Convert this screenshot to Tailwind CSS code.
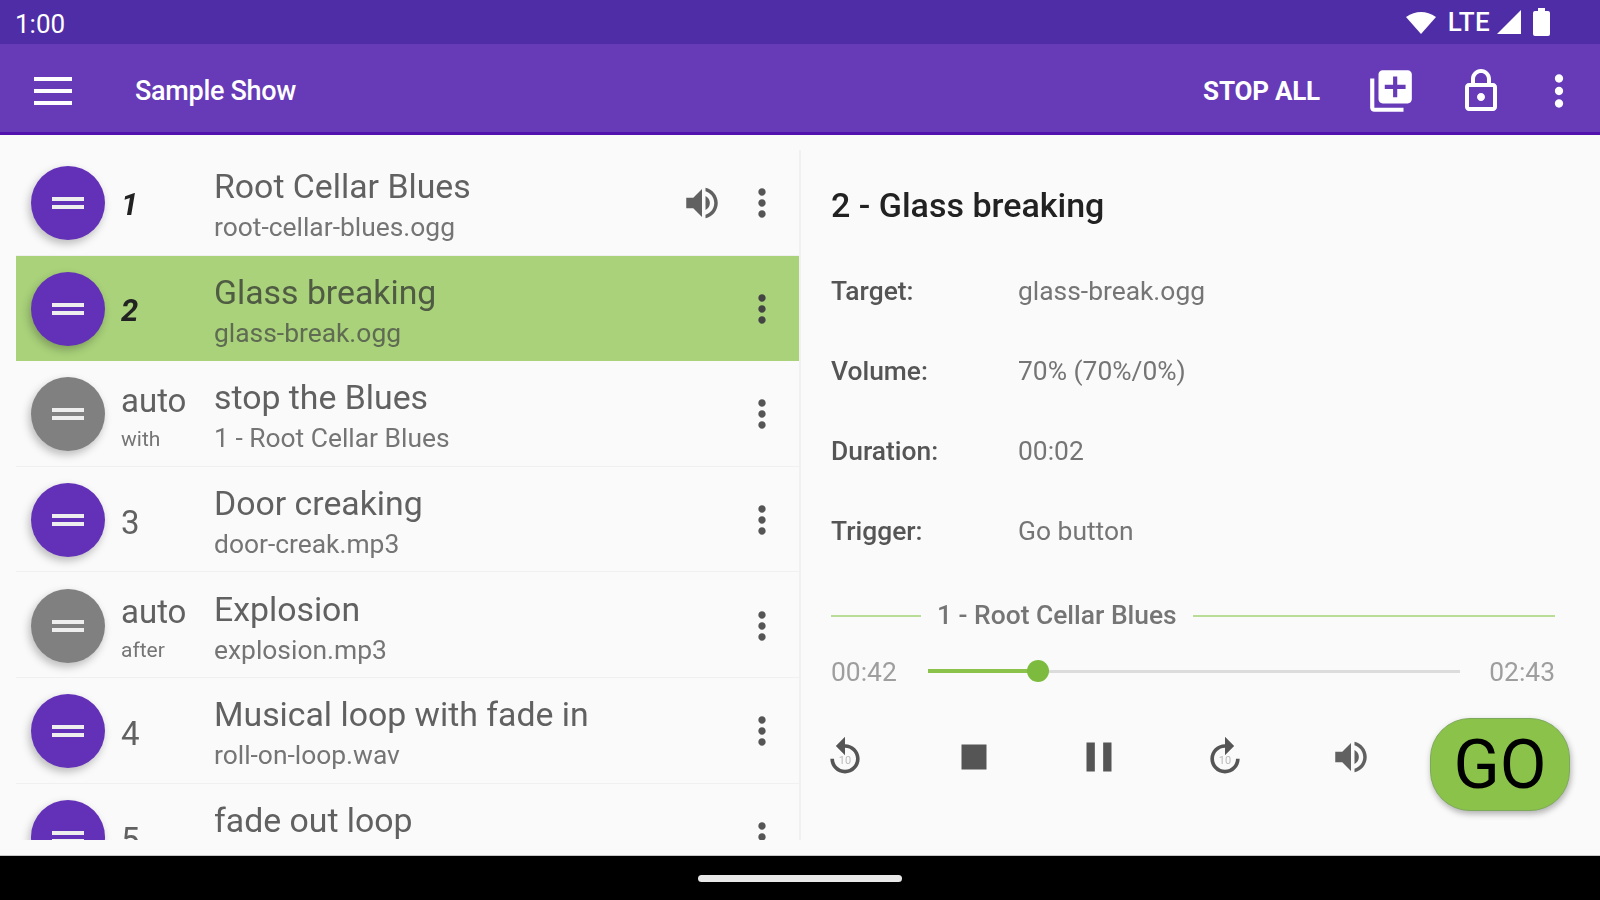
<!DOCTYPE html>
<html lang="en">
<head>
    <meta charset="UTF-8">
    <title>Sample Show</title>
    <script src="https://cdn.jsdelivr.net/npm/@tailwindcss/browser@4"></script>
</head>
<body class="bg-[#fafafa]">
<div class="w-[1600px] h-[900px] overflow-hidden blur-[0.5px] font-['Roboto',sans-serif]">

    <!-- status bar -->
    <div class="h-[44px] bg-[#4f2da6] flex items-center pl-[15px] pr-[50px] text-white">
        <span class="text-[26px] leading-none mt-[3px]">1:00</span>
        <div class="ml-auto flex items-center">
            <svg class="w-[30px] h-[24px]" viewBox="0 0 30 24" fill="#fff"><path d="M0 7 Q15 -3 30 7 L15 24 Z"/></svg>
            <span class="ml-[12px] text-[26px] leading-none font-medium tracking-[0.3px]">LTE</span>
            <svg class="ml-[7px] w-[24px] h-[24px]" viewBox="0 0 24 24" fill="#fff"><path d="M0 24 L24 0 V24 Z"/></svg>
            <svg class="ml-[12px] w-[17px] h-[28px]" viewBox="0 0 17 28" fill="#fff"><path d="M5 0h7v3h3a2 2 0 0 1 2 2v21a2 2 0 0 1-2 2H2a2 2 0 0 1-2-2V5a2 2 0 0 1 2-2h3z"/></svg>
        </div>
    </div>

    <!-- app bar -->
    <div class="h-[91px] bg-[#673ab7] border-b-[3px] border-[#5212ae] flex items-center pl-[34px] pt-[5px] text-white">
        <svg class="w-[38px] h-[28px]" viewBox="0 0 38 28" fill="#fff"><rect width="38" height="4"/><rect y="12" width="38" height="4"/><rect y="24" width="38" height="4"/></svg>
        <span class="ml-[63px] mt-[2px] text-[27px] font-medium tracking-[-0.3px]">Sample Show</span>
        <span class="ml-auto mt-[2px] text-[26px] font-bold tracking-[-0.2px]">STOP ALL</span>
        <svg class="ml-[46px] w-[50px] h-[50px]" viewBox="0 0 24 24" fill="#fff"><path d="M4 6H2v14c0 1.1.9 2 2 2h14v-2H4V6zm16-4H8c-1.1 0-2 .9-2 2v12c0 1.1.9 2 2 2h12c1.1 0 2-.9 2-2V4c0-1.1-.9-2-2-2zm-1 9h-4v4h-2v-4H9V9h4V5h2v4h4v2z"/></svg>
        <svg class="ml-[41px] w-[48px] h-[48px]" viewBox="0 0 24 24" fill="#fff"><path d="M18 8h-1V6c0-2.76-2.24-5-5-5S7 3.24 7 6v2H6c-1.1 0-2 .9-2 2v10c0 1.1.9 2 2 2h12c1.1 0 2-.9 2-2V10c0-1.1-.9-2-2-2zM9 6c0-1.66 1.34-3 3-3s3 1.34 3 3v2H9V6zm9 14H6V10h12v10zm-6-3c1.1 0 2-.9 2-2s-.9-2-2-2-2 .9-2 2 .9 2 2 2z"/></svg>
        <svg class="ml-[29px] mr-[16px] w-[50px] h-[50px]" viewBox="0 0 24 24" fill="#fff"><path d="M12 8c1.1 0 2-.9 2-2s-.9-2-2-2-2 .9-2 2 .9 2 2 2zm0 2c-1.1 0-2 .9-2 2s.9 2 2 2 2-.9 2-2-.9-2-2-2zm0 6c-1.1 0-2 .9-2 2s.9 2 2 2 2-.9 2-2-.9-2-2-2z"/></svg>
    </div>

    <!-- main -->
    <div class="h-[721px] pt-[15px] flex border-b border-[#c8c8c8]">
        <!-- cue list -->
        <div class="ml-[16px] w-[784px] h-[690px] overflow-hidden">

            <div class="h-[105.6px] flex items-center border-b border-[#f0f0f0]">
                <div class="ml-[15px] mt-[2px] w-[74px] h-[74px] shrink-0 rounded-full bg-[#6331b8] shadow-[-2px_4px_8px_rgba(0,0,0,0.25)] flex flex-col items-center justify-center gap-[4px]"><div class="w-[32px] h-[4px] bg-[#eee]"></div><div class="w-[32px] h-[4px] bg-[#eee]"></div></div>
                <div class="ml-[16px] mt-[6px] w-[93px] text-[31px] font-bold italic text-[#222]">1</div>
                <div class="flex-1 min-w-0 mt-[10px]">
                    <div class="text-[33.8px] leading-[40px] text-[#616161]">Root Cellar Blues</div>
                    <div class="text-[26.4px] leading-[40px] text-[#757575]">root-cellar-blues.ogg</div>
                </div>
                <svg class="w-[42px] h-[42px] mr-[17px] mt-[2px]" viewBox="0 0 24 24" fill="#616161"><path d="M3 9v6h4l5 5V4L7 9H3zm13.5 3c0-1.77-1.02-3.29-2.5-4.03v8.05c1.48-.73 2.5-2.25 2.5-4.02zM14 3.23v2.06c2.89.86 5 3.54 5 6.71s-2.11 5.85-5 6.71v2.06c4.01-.91 7-4.49 7-8.77s-2.99-7.86-7-8.77z"/></svg>
                <svg class="w-[44px] h-[44px] mr-[16px] mt-[2px]" viewBox="0 0 24 24" fill="#555"><path d="M12 8c1.1 0 2-.9 2-2s-.9-2-2-2-2 .9-2 2 .9 2 2 2zm0 2c-1.1 0-2 .9-2 2s.9 2 2 2 2-.9 2-2-.9-2-2-2zm0 6c-1.1 0-2 .9-2 2s.9 2 2 2 2-.9 2-2-.9-2-2-2z"/></svg>
            </div>

            <div class="h-[105.6px] flex items-center bg-[#a9d27a]">
                <div class="ml-[15px] mt-[2px] w-[74px] h-[74px] shrink-0 rounded-full bg-[#6331b8] shadow-[-2px_4px_8px_rgba(0,0,0,0.25)] flex flex-col items-center justify-center gap-[4px]"><div class="w-[32px] h-[4px] bg-[#eee]"></div><div class="w-[32px] h-[4px] bg-[#eee]"></div></div>
                <div class="ml-[16px] mt-[6px] w-[93px] text-[31px] font-bold italic text-[#222]">2</div>
                <div class="flex-1 min-w-0 mt-[10px]">
                    <div class="text-[33.8px] leading-[40px] text-[#4f5b42]">Glass breaking</div>
                    <div class="text-[26.4px] leading-[40px] text-[#5f6b52]">glass-break.ogg</div>
                </div>
                <svg class="w-[44px] h-[44px] mr-[16px] mt-[2px]" viewBox="0 0 24 24" fill="#444"><path d="M12 8c1.1 0 2-.9 2-2s-.9-2-2-2-2 .9-2 2 .9 2 2 2zm0 2c-1.1 0-2 .9-2 2s.9 2 2 2 2-.9 2-2-.9-2-2-2zm0 6c-1.1 0-2 .9-2 2s.9 2 2 2 2-.9 2-2-.9-2-2-2z"/></svg>
            </div>

            <div class="h-[105.6px] flex items-center border-b border-[#f0f0f0]">
                <div class="ml-[15px] mt-[2px] w-[74px] h-[74px] shrink-0 rounded-full bg-[#808080] shadow-[-2px_4px_8px_rgba(0,0,0,0.25)] flex flex-col items-center justify-center gap-[4px]"><div class="w-[32px] h-[4px] bg-[#eee]"></div><div class="w-[32px] h-[4px] bg-[#eee]"></div></div>
                <div class="ml-[16px] mt-[11px] w-[93px]">
                    <div class="text-[33px] leading-[40px] text-[#616161]">auto</div>
                    <div class="text-[21px] leading-[36px] text-[#757575]">with</div>
                </div>
                <div class="flex-1 min-w-0 mt-[10px]">
                    <div class="text-[33.8px] leading-[40px] text-[#616161]">stop the Blues</div>
                    <div class="text-[26.4px] leading-[40px] text-[#757575]">1 - Root Cellar Blues</div>
                </div>
                <svg class="w-[44px] h-[44px] mr-[16px] mt-[2px]" viewBox="0 0 24 24" fill="#555"><path d="M12 8c1.1 0 2-.9 2-2s-.9-2-2-2-2 .9-2 2 .9 2 2 2zm0 2c-1.1 0-2 .9-2 2s.9 2 2 2 2-.9 2-2-.9-2-2-2zm0 6c-1.1 0-2 .9-2 2s.9 2 2 2 2-.9 2-2-.9-2-2-2z"/></svg>
            </div>

            <div class="h-[105.6px] flex items-center border-b border-[#f0f0f0]">
                <div class="ml-[15px] mt-[2px] w-[74px] h-[74px] shrink-0 rounded-full bg-[#6331b8] shadow-[-2px_4px_8px_rgba(0,0,0,0.25)] flex flex-col items-center justify-center gap-[4px]"><div class="w-[32px] h-[4px] bg-[#eee]"></div><div class="w-[32px] h-[4px] bg-[#eee]"></div></div>
                <div class="ml-[16px] mt-[7px] w-[93px] text-[33px] text-[#616161]">3</div>
                <div class="flex-1 min-w-0 mt-[10px]">
                    <div class="text-[33.8px] leading-[40px] text-[#616161]">Door creaking</div>
                    <div class="text-[26.4px] leading-[40px] text-[#757575]">door-creak.mp3</div>
                </div>
                <svg class="w-[44px] h-[44px] mr-[16px] mt-[2px]" viewBox="0 0 24 24" fill="#555"><path d="M12 8c1.1 0 2-.9 2-2s-.9-2-2-2-2 .9-2 2 .9 2 2 2zm0 2c-1.1 0-2 .9-2 2s.9 2 2 2 2-.9 2-2-.9-2-2-2zm0 6c-1.1 0-2 .9-2 2s.9 2 2 2 2-.9 2-2-.9-2-2-2z"/></svg>
            </div>

            <div class="h-[105.6px] flex items-center border-b border-[#f0f0f0]">
                <div class="ml-[15px] mt-[2px] w-[74px] h-[74px] shrink-0 rounded-full bg-[#808080] shadow-[-2px_4px_8px_rgba(0,0,0,0.25)] flex flex-col items-center justify-center gap-[4px]"><div class="w-[32px] h-[4px] bg-[#eee]"></div><div class="w-[32px] h-[4px] bg-[#eee]"></div></div>
                <div class="ml-[16px] mt-[11px] w-[93px]">
                    <div class="text-[33px] leading-[40px] text-[#616161]">auto</div>
                    <div class="text-[21px] leading-[36px] text-[#757575]">after</div>
                </div>
                <div class="flex-1 min-w-0 mt-[10px]">
                    <div class="text-[33.8px] leading-[40px] text-[#616161]">Explosion</div>
                    <div class="text-[26.4px] leading-[40px] text-[#757575]">explosion.mp3</div>
                </div>
                <svg class="w-[44px] h-[44px] mr-[16px] mt-[2px]" viewBox="0 0 24 24" fill="#555"><path d="M12 8c1.1 0 2-.9 2-2s-.9-2-2-2-2 .9-2 2 .9 2 2 2zm0 2c-1.1 0-2 .9-2 2s.9 2 2 2 2-.9 2-2-.9-2-2-2zm0 6c-1.1 0-2 .9-2 2s.9 2 2 2 2-.9 2-2-.9-2-2-2z"/></svg>
            </div>

            <div class="h-[105.6px] flex items-center border-b border-[#f0f0f0]">
                <div class="ml-[15px] mt-[2px] w-[74px] h-[74px] shrink-0 rounded-full bg-[#6331b8] shadow-[-2px_4px_8px_rgba(0,0,0,0.25)] flex flex-col items-center justify-center gap-[4px]"><div class="w-[32px] h-[4px] bg-[#eee]"></div><div class="w-[32px] h-[4px] bg-[#eee]"></div></div>
                <div class="ml-[16px] mt-[7px] w-[93px] text-[33px] text-[#616161]">4</div>
                <div class="flex-1 min-w-0 mt-[10px]">
                    <div class="text-[33.8px] leading-[40px] text-[#616161]">Musical loop with fade in</div>
                    <div class="text-[26.4px] leading-[40px] text-[#757575]">roll-on-loop.wav</div>
                </div>
                <svg class="w-[44px] h-[44px] mr-[16px] mt-[2px]" viewBox="0 0 24 24" fill="#555"><path d="M12 8c1.1 0 2-.9 2-2s-.9-2-2-2-2 .9-2 2 .9 2 2 2zm0 2c-1.1 0-2 .9-2 2s.9 2 2 2 2-.9 2-2-.9-2-2-2zm0 6c-1.1 0-2 .9-2 2s.9 2 2 2 2-.9 2-2-.9-2-2-2z"/></svg>
            </div>

            <div class="h-[105.6px] flex items-center">
                <div class="ml-[15px] mt-[2px] w-[74px] h-[74px] shrink-0 rounded-full bg-[#6331b8] shadow-[-2px_4px_8px_rgba(0,0,0,0.25)] flex flex-col items-center justify-center gap-[4px]"><div class="w-[32px] h-[4px] bg-[#eee]"></div><div class="w-[32px] h-[4px] bg-[#eee]"></div></div>
                <div class="ml-[16px] mt-[7px] w-[93px] text-[33px] text-[#616161]">5</div>
                <div class="flex-1 min-w-0 mt-[10px]">
                    <div class="text-[33.8px] leading-[40px] text-[#616161]">fade out loop</div>
                    <div class="h-[40px]"></div>
                </div>
                <svg class="w-[44px] h-[44px] mr-[16px] mt-[2px]" viewBox="0 0 24 24" fill="#555"><path d="M12 8c1.1 0 2-.9 2-2s-.9-2-2-2-2 .9-2 2 .9 2 2 2zm0 2c-1.1 0-2 .9-2 2s.9 2 2 2 2-.9 2-2-.9-2-2-2zm0 6c-1.1 0-2 .9-2 2s.9 2 2 2 2-.9 2-2-.9-2-2-2z"/></svg>
            </div>
        </div>

        <!-- detail pane -->
        <div class="w-[800px] h-[690px] border-l-2 border-[#f0f0f0] -ml-[1px] pl-[30px] pr-[44px] pt-[35px]">
            <div class="text-[34px] leading-[40px] font-medium text-[#222]">2 - Glass breaking</div>
            <div class="mt-[27px] grid grid-cols-[187px_1fr] auto-rows-[80px] items-center text-[26.4px]">
                <div class="font-medium text-[#555]">Target:</div><div class="text-[#757575]">glass-break.ogg</div>
                <div class="font-medium text-[#555]">Volume:</div><div class="text-[#757575]">70% (70%/0%)</div>
                <div class="font-medium text-[#555]">Duration:</div><div class="text-[#757575]">00:02</div>
                <div class="font-medium text-[#555]">Trigger:</div><div class="text-[#757575]">Go button</div>
            </div>
            <div class="mt-[29px] h-[30px] flex items-center">
                <div class="w-[90px] h-[2px] bg-[#b9dc97]"></div>
                <span class="mx-[16px] text-[26.4px] font-medium text-[#757575]">1 - Root Cellar Blues</span>
                <div class="flex-1 h-[2px] bg-[#b9dc97]"></div>
            </div>
            <div class="mt-[24px] h-[32px] flex items-center">
                <span class="w-[97px] text-[26.4px] text-[#9e9e9e] mt-[3px]">00:42</span>
                <div class="w-[532px] h-[3px] bg-[#dcdcdc] flex items-center">
                    <div class="w-[110px] h-[4px] bg-[#8bc34a]"></div>
                    <div class="w-[22px] h-[22px] -ml-[11px] rounded-full bg-[#7cbb3e]"></div>
                </div>
                <span class="ml-auto text-[26.4px] text-[#9e9e9e] mt-[3px]">02:43</span>
            </div>
            <div class="mt-[31px] flex items-center">
                <div class="flex items-center mb-[16px]">
                    <div class="w-[126px] shrink-0 -ml-[8px]">
                        <svg class="w-[44px] h-[44px]" viewBox="0 0 24 24" fill="#555"><path d="M12 5V1L7 6l5 5V7c3.31 0 6 2.69 6 6s-2.69 6-6 6-6-2.69-6-6H4c0 4.42 3.58 8 8 8s8-3.58 8-8-3.58-8-8-8z"/><text x="12" y="16" text-anchor="middle" font-size="6" font-family="Roboto" fill="#bbb">10</text></svg>
                    </div>
                    <div class="w-[125px] shrink-0"><svg class="w-[50px] h-[50px]" viewBox="0 0 24 24" fill="#555"><path d="M6 6h12v12H6z"/></svg></div>
                    <div class="w-[127px] shrink-0"><svg class="w-[50px] h-[50px]" viewBox="0 0 24 24" fill="#555"><path d="M6 19h4V5H6v14zm8-14v14h4V5h-4z"/></svg></div>
                    <div class="w-[129px] shrink-0 pl-[2px]">
                        <svg class="w-[44px] h-[44px]" viewBox="0 0 24 24" fill="#555"><path d="M18 13c0 3.31-2.69 6-6 6s-6-2.69-6-6 2.69-6 6-6v4l5-5-5-5v4c-4.42 0-8 3.58-8 8s3.58 8 8 8 8-3.58 8-8h-2z"/><text x="12" y="16" text-anchor="middle" font-size="6" font-family="Roboto" fill="#bbb">10</text></svg>
                    </div>
                    <svg class="w-[42px] h-[42px] shrink-0" viewBox="0 0 24 24" fill="#616161"><path d="M3 9v6h4l5 5V4L7 9H3zm13.5 3c0-1.77-1.02-3.29-2.5-4.03v8.05c1.48-.73 2.5-2.25 2.5-4.02zM14 3.23v2.06c2.89.86 5 3.54 5 6.71s-2.11 5.85-5 6.71v2.06c4.01-.91 7-4.49 7-8.77s-2.99-7.86-7-8.77z"/></svg>
                </div>
                <div class="ml-auto -mr-[15px] w-[140px] h-[93px] rounded-[40px] bg-[#8bc34a] border border-[#7da95a] shadow-[1px_3px_6px_rgba(0,0,0,0.3)] flex items-center justify-center text-[68px] leading-none text-black">GO</div>
            </div>
        </div>
    </div>

    <!-- nav bar -->
    <div class="h-[44px] bg-black flex items-center justify-center">
        <div class="w-[204px] h-[7px] rounded-full bg-[#e8e8e8]"></div>
    </div>
</div>
</body>
</html>
